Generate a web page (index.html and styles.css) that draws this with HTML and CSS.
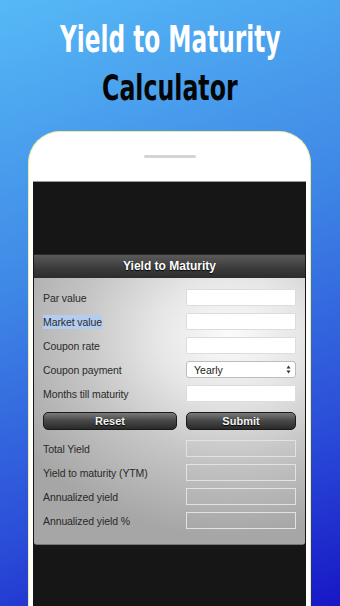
FILE: index.html
```html
<!DOCTYPE html>
<html>
<head>
<meta charset="utf-8">
<link rel="stylesheet" href="styles.css">
</head>
<body>
<div class="hero">
  <div class="t1"><span>Yield to Maturity</span></div>
  <div class="t2"><span>Calculator</span></div>
</div>
<div class="phone">
  <div class="phone-top"><div class="speaker"></div></div>
  <div class="screen">
    <div class="panel">
      <div class="panel-head">Yield to Maturity</div>
      <div class="panel-body">
        <div class="row"><span class="lbl">Par value</span><div class="inp"></div></div>
        <div class="row"><span class="lbl"><span class="sel">Market value</span></span><div class="inp"></div></div>
        <div class="row"><span class="lbl">Coupon rate</span><div class="inp"></div></div>
        <div class="row"><span class="lbl">Coupon payment</span>
          <div class="inp select"><span>Yearly</span>
            <svg class="arrows" width="5" height="9" viewBox="0 0 5 9"><path d="M0.5 3.5 L2.5 0.5 L4.5 3.5 Z M0.5 5.5 L2.5 8.5 L4.5 5.5 Z" fill="#333"/></svg>
          </div>
        </div>
        <div class="row"><span class="lbl">Months till maturity</span><div class="inp"></div></div>
        <div class="btns"><div class="btn">Reset</div><div class="btn">Submit</div></div>
        <div class="row"><span class="lbl">Total Yield</span><div class="out"></div></div>
        <div class="row"><span class="lbl">Yield to maturity (YTM)</span><div class="out"></div></div>
        <div class="row"><span class="lbl">Annualized yield</span><div class="out"></div></div>
        <div class="row"><span class="lbl">Annualized yield %</span><div class="out"></div></div>
      </div>
    </div>
  </div>
</div>
</body>
</html>
```

FILE: styles.css
```css
html, body {
  margin: 0;
  padding: 0;
}
body {
  width: 340px;
  height: 606px;
  overflow: hidden;
  background: linear-gradient(160deg, #56b9f6 0%, #3f88e6 40%, #2a4dd8 75%, #1717c6 100%);
  font-family: "Liberation Sans", Arial, sans-serif;
}
.hero {
  padding-top: 16px;
  height: 131px;
  box-sizing: border-box;
  text-align: center;
}
.t1, .t2 {
  font-family: "DejaVu Sans Condensed", "DejaVu Sans", sans-serif;
  font-weight: bold;
  line-height: 46px;
  height: 46px;
}
.t1 span, .t2 span {
  display: inline-block;
}
.t1 span {
  transform: scaleX(0.68);
}
.t2 span {
  transform: scaleX(0.73);
}
.t1 {
  color: #ffffff;
  font-size: 38px;
}
.t2 {
  color: #050505;
  font-size: 36px;
  margin-top: 3px;
}
.phone {
  margin-left: 28px;
  width: 283px;
  height: 480px;
  box-sizing: border-box;
  background: #ffffff;
  border: 1px solid #ecec9c;
  border-bottom: none;
  border-radius: 32px 32px 0 0;
  padding: 0 4px;
}
.phone-top {
  height: 49px;
  display: flex;
  justify-content: center;
  align-items: center;
}
.speaker {
  width: 52px;
  height: 3px;
  border-radius: 2px;
  background: #d4d4d4;
}
.screen {
  background: #161616;
  border-top: 1px solid #999;
  height: 430px;
  padding-top: 72px;
  box-sizing: border-box;
}
.panel {
  margin: 0 1px;
  border-radius: 0 0 3px 3px;
  overflow: hidden;
}
.panel-head {
  height: 23px;
  line-height: 23px;
  text-align: center;
  color: #ffffff;
  font-weight: bold;
  font-size: 12px;
  background: linear-gradient(#5a5a5a, #3a3a3a 60%, #2c2c2c);
  border-top: 1px solid #2a2a2a;
  text-shadow: 0 1px 1px #000;
}
.panel-body {
  background: radial-gradient(ellipse 90% 75% at 72% 22%, #fbfbfb 0%, #e6e6e6 30%, #c6c6c6 60%, #a6a6a6 100%);
  padding: 11px 9px 15px 9px;
  display: flex;
  flex-direction: column;
  gap: 7px;
  border-bottom: 1px solid #777;
}
.row {
  height: 17px;
  display: flex;
  align-items: center;
  justify-content: space-between;
}
.lbl {
  font-size: 10.5px;
  color: #2a2a2a;
  letter-spacing: -0.1px;
}
.sel {
  background: #b3cdf0;
  padding: 1px 0;
}
.inp {
  width: 110px;
  height: 17px;
  box-sizing: border-box;
  background: #ffffff;
  border: 1px solid #dcdcdc;
  border-radius: 1px;
}
.select {
  border-radius: 3px;
  border-color: #bdbdbd;
  display: flex;
  align-items: center;
  justify-content: space-between;
  padding: 0 4px 0 7px;
  font-size: 10.5px;
  color: #222;
}
.out {
  width: 110px;
  height: 17px;
  box-sizing: border-box;
  border: 1.5px solid #e2e2e2;
}
.btns {
  display: flex;
  gap: 9px;
  margin: 3px 0;
}
.btn {
  height: 18px;
  box-sizing: border-box;
  border: 1px solid #1a1a1a;
  border-radius: 5px;
  background: linear-gradient(#7a7a7a, #4a4a4a 45%, #2a2a2a);
  color: #f4f4f4;
  font-weight: bold;
  font-size: 11px;
  line-height: 16px;
  text-align: center;
  text-shadow: 0 1px 1px #000;
}
.btn:first-child {
  width: 134px;
}
.btn:last-child {
  flex: 1;
}
```
